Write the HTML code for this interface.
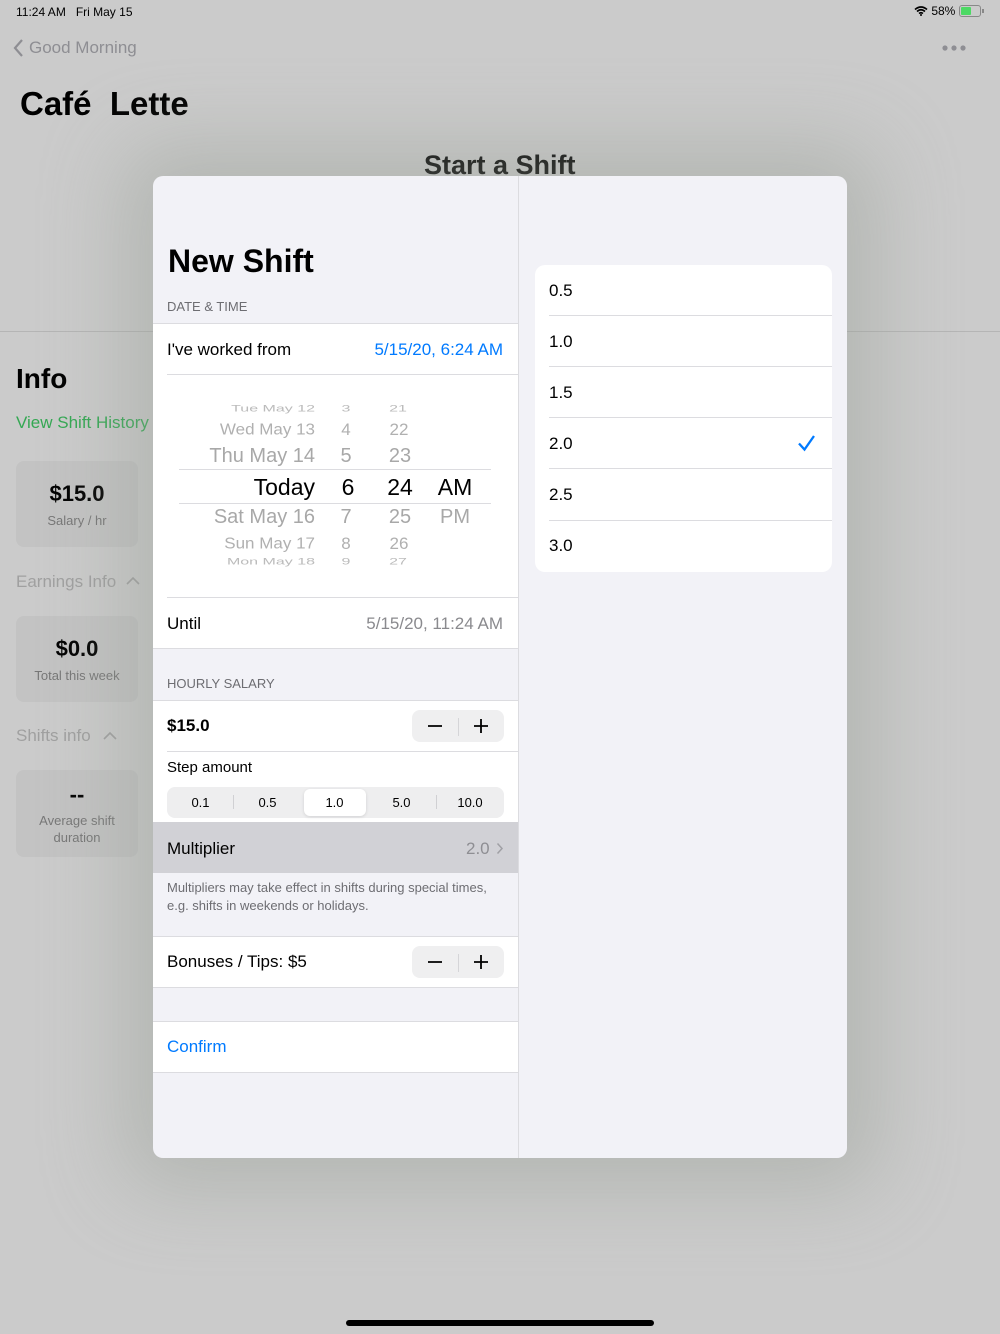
<!DOCTYPE html>
<html><head><meta charset="utf-8"><style>
*{margin:0;padding:0;box-sizing:border-box}
body{width:1000px;height:1334px;position:relative;overflow:hidden;background:#cbcbcb;font-family:"Liberation Sans",Arial,sans-serif;color:#000}
.a{position:absolute;white-space:nowrap}
.w{position:absolute;background:#fff}
.sep{position:absolute;height:1px;background:#dcdce0}
.g{color:#8e8e93}
.card{position:absolute;left:16px;width:122px;background:#c3c3c3;border-radius:8px;text-align:center}
.stp{position:absolute;left:412px;width:92px;height:32px;background:#efeff0;border-radius:8px}
.pk{position:absolute;text-align:center;width:60px}
.sq{transform:scaleY(.6);transform-origin:center}
</style></head><body>
<div class="a" style="left:16px;top:5px;font-size:12px">11:24 AM&nbsp;&nbsp;&nbsp;Fri May 15</div>
<div class="a" style="left:914px;top:4px;font-size:12px">
<svg width="14" height="11" viewBox="0 0 14 11" style="vertical-align:-1px"><path d="M1 4.5Q7 -0.5 13 4.5M3 6.5Q7 3 11 6.5M5 8.5Q7 7 9 8.5" stroke="#000" stroke-width="1.7" fill="none"/><circle cx="7" cy="10" r="1" fill="#000"/></svg> 58%</div>
<div class="a" style="left:959px;top:5px;width:22px;height:12px;border:1px solid #888;border-radius:3px"><div style="width:10px;height:8px;margin:1px;background:#4cd964;border-radius:1px"></div></div>
<div class="a" style="left:982px;top:9px;width:2px;height:4px;background:#888"></div>
<svg class="a" style="left:12px;top:38px" width="12" height="20"><path d="M10 2L3 10L10 18" stroke="#8e8e93" stroke-width="2.2" fill="none"/></svg>
<div class="a g" style="left:29px;top:38px;font-size:17px">Good Morning</div>
<svg class="a" style="left:941px;top:44px" width="26" height="8"><circle cx="4" cy="4" r="2.6" fill="#8e8e93"/><circle cx="13" cy="4" r="2.6" fill="#8e8e93"/><circle cx="22" cy="4" r="2.6" fill="#8e8e93"/></svg>
<div class="a" style="left:20px;top:85px;font-size:33px;font-weight:bold">Café&nbsp; Lette</div>
<div class="a" style="left:0;top:331px;width:1000px;height:1px;background:#b5b5b5"></div>
<div class="a" style="left:424px;top:150px;font-size:27px;font-weight:bold">Start a Shift</div>

<div class="a" style="left:16px;top:363px;font-size:28px;font-weight:bold">Info</div>
<div class="a" style="left:16px;top:413px;font-size:17px;color:#34a853">View Shift History</div>
<div class="card" style="top:461px;height:86px"><div style="margin-top:20px;font-size:22px;font-weight:bold">$15.0</div><div style="margin-top:6px;font-size:13px;color:#777">Salary / hr</div></div>
<div class="a" style="left:16px;top:572px;font-size:17px;color:#a0a0a0">Earnings Info</div>
<svg class="a" style="left:125px;top:576px" width="16" height="10"><path d="M2 8L8 2L14 8" stroke="#a0a0a0" stroke-width="1.6" fill="none"/></svg>
<div class="card" style="top:616px;height:86px"><div style="margin-top:20px;font-size:22px;font-weight:bold">$0.0</div><div style="margin-top:6px;font-size:13px;color:#777">Total this week</div></div>
<div class="a" style="left:16px;top:726px;font-size:17px;color:#a0a0a0">Shifts info</div>
<svg class="a" style="left:102px;top:731px" width="16" height="10"><path d="M2 8L8 2L14 8" stroke="#a0a0a0" stroke-width="1.6" fill="none"/></svg>
<div class="card" style="top:770px;height:87px"><div style="margin-top:12px;font-size:22px;font-weight:bold">--</div><div style="margin-top:4px;font-size:13px;color:#777;line-height:17px">Average shift<br>duration</div></div>

<div class="a" style="left:153px;top:176px;width:694px;height:982px;background:#f2f2f7;border-radius:10px;overflow:hidden;box-shadow:0 0 80px 30px rgba(150,158,148,0.45)">
<div style="position:absolute;left:365px;top:0;width:1px;height:100%;background:#dcdce0"></div>
</div>
<div class="a" style="left:168px;top:243px;font-size:32px;font-weight:bold">New Shift</div>
<div class="a g" style="left:167px;top:299px;font-size:13px;color:#6d6d72">DATE &amp; TIME</div>
<div class="sep" style="left:153px;top:323px;width:365px"></div>
<div class="w" style="left:153px;top:324px;width:365px;height:324px"></div>
<div class="a" style="left:167px;top:340px;font-size:17px">I've worked from</div>
<div class="a" style="right:497px;top:340px;font-size:17px;color:#007aff">5/15/20, 6:24 AM</div>
<div class="sep" style="left:167px;top:374px;width:351px"></div>
<div class="sep" style="left:179px;top:469px;width:312px"></div>
<div class="sep" style="left:179px;top:503px;width:312px"></div>
<div class="a sq" style="right:685px;top:400px;font-size:16px;color:#bbb">Tue May 12</div>
<div class="a" style="right:685px;top:420px;font-size:17px;color:#b0b0b0;transform:scaleY(.9)">Wed May 13</div>
<div class="a" style="right:685px;top:445px;font-size:20px;color:#a8a8a8">Thu May 14</div>
<div class="a" style="right:685px;top:474px;font-size:23px;color:#000">Today</div>
<div class="a" style="right:685px;top:506px;font-size:20px;color:#a8a8a8">Sat May 16</div>
<div class="a" style="right:685px;top:534px;font-size:17px;color:#b0b0b0;transform:scaleY(.9)">Sun May 17</div>
<div class="a sq" style="right:685px;top:553px;font-size:16px;color:#bbb">Mon May 18</div>
<div class="pk sq" style="left:316px;top:400px;font-size:16px;color:#bbb">3</div>
<div class="pk" style="left:316px;top:420px;font-size:17px;color:#b0b0b0">4</div>
<div class="pk" style="left:316px;top:445px;font-size:20px;color:#a8a8a8">5</div>
<div class="pk" style="left:318px;top:474px;font-size:23px">6</div>
<div class="pk" style="left:316px;top:506px;font-size:20px;color:#a8a8a8">7</div>
<div class="pk" style="left:316px;top:534px;font-size:17px;color:#b0b0b0">8</div>
<div class="pk sq" style="left:316px;top:553px;font-size:16px;color:#bbb">9</div>
<div class="pk sq" style="left:368px;top:400px;font-size:16px;color:#bbb">21</div>
<div class="pk" style="left:369px;top:420px;font-size:17px;color:#b0b0b0">22</div>
<div class="pk" style="left:370px;top:445px;font-size:20px;color:#a8a8a8">23</div>
<div class="pk" style="left:370px;top:474px;font-size:23px">24</div>
<div class="pk" style="left:370px;top:506px;font-size:20px;color:#a8a8a8">25</div>
<div class="pk" style="left:369px;top:534px;font-size:17px;color:#b0b0b0">26</div>
<div class="pk sq" style="left:368px;top:553px;font-size:16px;color:#bbb">27</div>
<div class="pk" style="left:425px;top:474px;font-size:23px">AM</div>
<div class="pk" style="left:425px;top:506px;font-size:20px;color:#a8a8a8">PM</div>
<div class="sep" style="left:167px;top:597px;width:351px"></div>
<div class="a" style="left:167px;top:614px;font-size:17px">Until</div>
<div class="a" style="right:497px;top:614px;font-size:17px;color:#8a8a8e">5/15/20, 11:24 AM</div>
<div class="sep" style="left:153px;top:648px;width:365px"></div>
<div class="a" style="left:167px;top:676px;font-size:13px;color:#6d6d72">HOURLY SALARY</div>
<div class="sep" style="left:153px;top:700px;width:365px"></div>
<div class="w" style="left:153px;top:701px;width:365px;height:121px"></div>
<div class="a" style="left:167px;top:716px;font-size:17px;font-weight:bold">$15.0</div>
<div class="stp" style="top:710px"></div>
<svg class="a" style="left:427px;top:718px" width="62" height="16"><path d="M1 8H15M47 8H61M54 1V15" stroke="#000" stroke-width="1.8"/></svg>
<div class="a" style="left:458px;top:718px;width:1px;height:18px;background:#d5d5d8"></div>
<div class="sep" style="left:167px;top:751px;width:351px"></div>
<div class="a" style="left:167px;top:759px;font-size:15px">Step amount</div>
<div class="a" style="left:167px;top:787px;width:337px;height:31px;background:#eeeeef;border-radius:8px"></div>
<div class="a" style="left:304px;top:789px;width:62px;height:27px;background:#fff;border-radius:6px;box-shadow:0 1px 3px rgba(0,0,0,.12)"></div>
<div class="a" style="left:233px;top:795px;width:1px;height:14px;background:#d0d0d3"></div>
<div class="a" style="left:436px;top:795px;width:1px;height:14px;background:#d0d0d3"></div>
<div class="a" style="left:167px;top:795px;width:67px;text-align:center;font-size:13px">0.1</div>
<div class="a" style="left:234px;top:795px;width:67px;text-align:center;font-size:13px">0.5</div>
<div class="a" style="left:301px;top:795px;width:67px;text-align:center;font-size:13px">1.0</div>
<div class="a" style="left:368px;top:795px;width:67px;text-align:center;font-size:13px">5.0</div>
<div class="a" style="left:436px;top:795px;width:68px;text-align:center;font-size:13px">10.0</div>
<div class="a" style="left:153px;top:822px;width:365px;height:51px;background:#d1d1d6"></div>
<div class="a" style="left:167px;top:839px;font-size:17px">Multiplier</div>
<div class="a" style="left:466px;top:839px;font-size:17px;color:#8e8e93">2.0</div>
<svg class="a" style="left:496px;top:842px" width="8" height="13"><path d="M1.5 1.5L6 6.5L1.5 11.5" stroke="#a0a0a5" stroke-width="1.5" fill="none"/></svg>
<div class="a" style="left:167px;top:879px;font-size:13px;line-height:18px;color:#6d6d72">Multipliers may take effect in shifts during special times,<br>e.g. shifts in weekends or holidays.</div>
<div class="sep" style="left:153px;top:936px;width:365px"></div>
<div class="w" style="left:153px;top:937px;width:365px;height:50px"></div>
<div class="a" style="left:167px;top:952px;font-size:17px">Bonuses / Tips: $5</div>
<div class="stp" style="top:946px"></div>
<svg class="a" style="left:427px;top:954px" width="62" height="16"><path d="M1 8H15M47 8H61M54 1V15" stroke="#000" stroke-width="1.8"/></svg>
<div class="a" style="left:458px;top:954px;width:1px;height:18px;background:#d5d5d8"></div>
<div class="sep" style="left:153px;top:987px;width:365px"></div>
<div class="sep" style="left:153px;top:1021px;width:365px"></div>
<div class="w" style="left:153px;top:1022px;width:365px;height:50px"></div>
<div class="a" style="left:167px;top:1037px;font-size:17px;color:#007aff">Confirm</div>
<div class="sep" style="left:153px;top:1072px;width:365px"></div>

<div class="w" style="left:535px;top:265px;width:297px;height:307px;border-radius:10px"></div>
<div class="a" style="left:549px;top:281px;font-size:17px">0.5</div>
<div class="sep" style="left:549px;top:315px;width:283px"></div>
<div class="a" style="left:549px;top:332px;font-size:17px">1.0</div>
<div class="sep" style="left:549px;top:366px;width:283px"></div>
<div class="a" style="left:549px;top:383px;font-size:17px">1.5</div>
<div class="sep" style="left:549px;top:417px;width:283px"></div>
<div class="a" style="left:549px;top:434px;font-size:17px">2.0</div>
<svg class="a" style="left:797px;top:434px" width="20" height="18"><path d="M2 9.5L7.5 15.5L17 2" stroke="#007aff" stroke-width="2.3" fill="none"/></svg>
<div class="sep" style="left:549px;top:468px;width:283px"></div>
<div class="a" style="left:549px;top:485px;font-size:17px">2.5</div>
<div class="sep" style="left:549px;top:520px;width:283px"></div>
<div class="a" style="left:549px;top:536px;font-size:17px">3.0</div>

<div class="a" style="left:346px;top:1320px;width:308px;height:6px;background:#000;border-radius:3px"></div>
</body></html>
